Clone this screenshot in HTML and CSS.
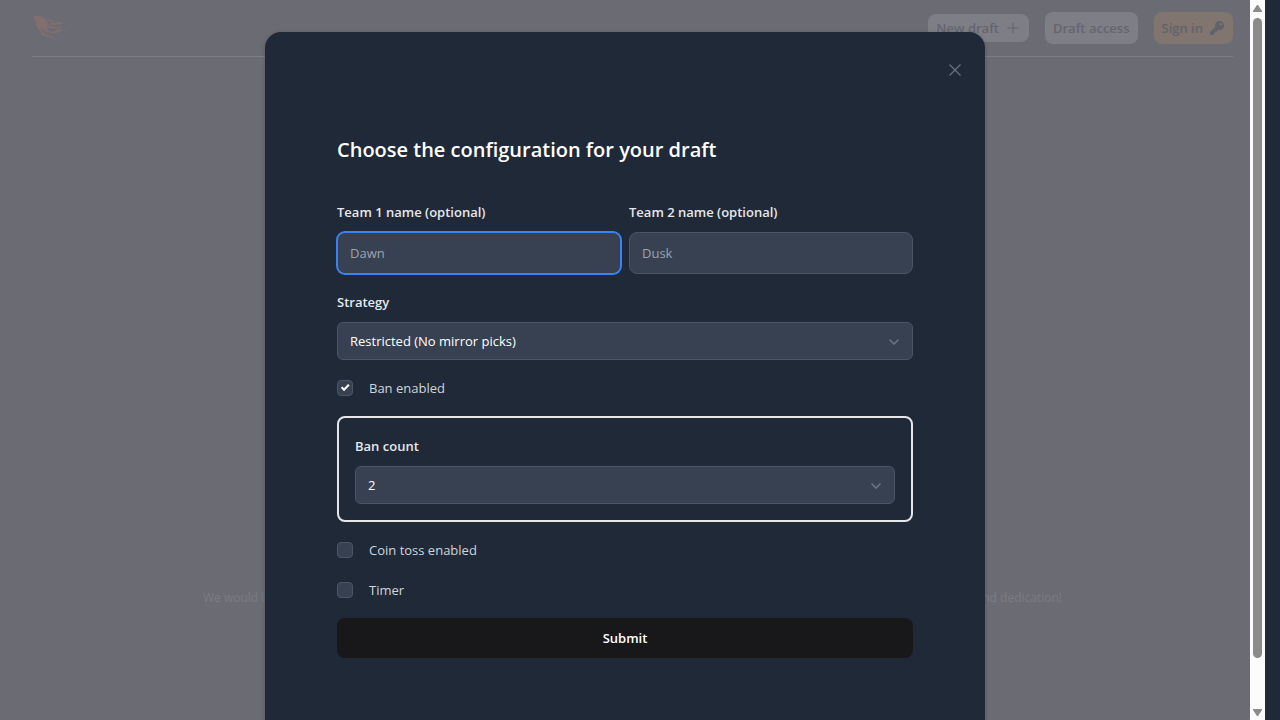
FILE: index.html
```html
<!DOCTYPE html>
<html lang="en">
<head>
<meta charset="utf-8">
<meta name="viewport" content="width=device-width, initial-scale=1">
<title>Draft configuration</title>
<link rel="stylesheet" href="styles.css">
</head>
<body>
<div class="page">
  <header class="topbar">
    <a class="brand" href="#" aria-label="Home">
      <svg width="36" height="26" viewBox="0 0 36 26" fill="currentColor">
        <path d="M0 3Q2 1 4 1Q8 0 11 2Q15 5 16 9Q17 11 14 12Q15 16 20 17Q16 19 11 15Q8 11 9 14Q11 18 16 20L21 22L24 25L18 22Q12 22 8 18L10 18Q5 14 4 9Q4 4 0 3Z"/>
        <path d="M15 4L20 5L22 7L17 6ZM17 9Q20 7 23 8L29 7L31 9L24 10Q20 9 17 11ZM15 12Q20 10 24 12L31 11Q27 14 22 14Q19 12 15 14ZM16 16Q20 18 23 16L26 14L31 14Q28 17 24 18Q19 19 16 16ZM31 15L36 18L32 17Z"/>
      </svg>
    </a>
    <nav class="actions">
      <button class="chip chip-short" type="button">New draft
        <svg width="16" height="16" viewBox="0 0 16 16" fill="none" stroke="currentColor"><path d="M8 2.500v11M2.500 8h11"/></svg>
      </button>
      <button class="chip" type="button">Draft access</button>
      <button class="chip chip-warm" type="button">Sign in
        <svg width="16" height="16" viewBox="0 0 16 16" fill="currentColor"><path fill-rule="evenodd" d="M10.500 1a4.500 4.500 0 0 0-4.300 5.900L1 12v3h3.500v-1.700H6v-1.500h1.500L9 9.700A4.500 4.500 0 1 0 10.500 1ZM11.700 3a1.300 1.300 0 1 1 0 2.600 1.300 1.300 0 0 1 0-2.600Z"/></svg>
      </button>
    </nav>
  </header>
  <footer class="thanks"><span>We would like to thank</span><span>and dedication!</span></footer>
</div>

<div class="layer">
  <div class="scroller">
    <section class="modal" role="dialog" aria-labelledby="modal-title">
      <button class="close" type="button" aria-label="Close">
        <svg width="12" height="12" viewBox="0 0 12 12" fill="none" stroke="currentColor" stroke-width="1.200"><path d="M.5.500l11 11M11.500.500l-11 11"/></svg>
      </button>
      <h1 class="title" id="modal-title">Choose the configuration for your draft</h1>
      <form class="form">
        <div class="teams">
          <div class="field">
            <label for="team1">Team 1 name (optional)</label>
            <input class="text active" id="team1" type="text" placeholder="Dawn">
          </div>
          <div class="field">
            <label for="team2">Team 2 name (optional)</label>
            <input class="text" id="team2" type="text" placeholder="Dusk">
          </div>
        </div>
        <div class="field">
          <label for="strategy">Strategy</label>
          <div class="select">
            <select id="strategy"><option>Restricted (No mirror picks)</option></select>
            <svg class="chevron" width="12" height="8" viewBox="0 0 12 8" fill="none" stroke="currentColor" stroke-width="1.600"><path d="M1.500 1.500l4.500 4.500 4.500-4.500"/></svg>
          </div>
        </div>
        <label class="check"><input type="checkbox" checked>Ban enabled</label>
        <div class="group">
          <div class="field">
            <label for="bans">Ban count</label>
            <div class="select">
              <select id="bans"><option>2</option></select>
              <svg class="chevron" width="12" height="8" viewBox="0 0 12 8" fill="none" stroke="currentColor" stroke-width="1.600"><path d="M1.500 1.500l4.500 4.500 4.500-4.500"/></svg>
            </div>
          </div>
        </div>
        <div class="checks">
          <label class="check"><input type="checkbox">Coin toss enabled</label>
          <label class="check"><input type="checkbox">Timer</label>
        </div>
        <button class="submit" type="button">Submit</button>
      </form>
    </section>
  </div>
  <div class="rail" aria-hidden="true">
    <svg width="9" height="7" viewBox="0 0 9 7"><path d="M4 0h1l4 6v1H0V6z"/></svg>
    <div class="thumb"></div>
    <svg width="9" height="7" viewBox="0 0 9 7"><path d="M0 0h9v1L5 7H4L0 1z"/></svg>
  </div>
</div>
</body>
</html>
```
FILE: styles.css
```css
* { box-sizing: border-box; }

body {
  margin: 0;
  height: 100vh;
  overflow: hidden;
  padding-right: 15px;
  background: #1f2937;
  color: #e5e7eb;
  font: 13px/20px "Segoe UI", "Open Sans", "Noto Sans", sans-serif;
}

button, input, select { font: inherit; }
button { border: 0; }
svg { display: block; }

.page {
  height: 100%;
  padding: 0 32px;
  display: flex;
  flex-direction: column;
  background: #6b6b74;
}

.topbar {
  height: 57px;
  flex: none;
  display: flex;
  align-items: center;
  justify-content: space-between;
  border-bottom: 1px solid #7d7d86;
}

.brand { color: #816f70; }
.actions { display: flex; align-items: center; gap: 16px; }

.chip {
  height: 32px;
  display: flex;
  align-items: center;
  gap: 6px;
  padding: 0 8px;
  border-radius: 8px;
  background: #7e7e87;
  color: #65656e;
  font-weight: 600;
}
.chip-short { height: 28px; }
.chip-warm { background: #80756f; color: #62626b; }

.thanks {
  margin: auto 171px 112px;
  display: flex;
  justify-content: space-between;
  color: #7c7c85;
  font-size: 12px;
}

.layer {
  position: absolute;
  inset: 0 15px 0 0;
  display: flex;
}

.scroller {
  flex: 1;
  overflow: hidden;
  padding: 32px 16px;
}

.modal {
  position: relative;
  max-width: 720px;
  min-height: 100vh;
  margin: 0 auto;
  padding: 102px 72px 72px;
  border-radius: 16px;
  background: #1f2937;
  box-shadow: 0 1px 4px rgba(0, 0, 0, .2);
}

.close {
  position: absolute;
  top: 24px;
  right: 16px;
  padding: 8px;
  background: none;
  color: #6b7280;
}

.title {
  margin: 0 0 36px;
  color: #fff;
  font-size: 20px;
  line-height: 32px;
  font-weight: 600;
}

.form { display: flex; flex-direction: column; gap: 18px; }
.teams { display: grid; grid-template-columns: 1fr 1fr; gap: 8px; }
.field { display: flex; flex-direction: column; gap: 10px; }
.field > label { font-weight: 600; }

.text, .select select {
  width: 100%;
  padding: 0 12px;
  border: 1px solid #4b5563;
  background: #384151;
  color: #fff;
  outline: 0;
}
.text { height: 42px; border-radius: 8px; }
.text::placeholder { color: #9ca3af; opacity: 1; }
.text.active { border-color: #3b82f6; box-shadow: 0 0 0 1px #3b82f6; }

.select { position: relative; }
.select select {
  display: block;
  height: 38px;
  border-radius: 6px;
  appearance: none;
}
.chevron {
  position: absolute;
  right: 13px;
  top: 16px;
  color: #6b7280;
  pointer-events: none;
}

.check {
  display: flex;
  align-items: center;
  gap: 16px;
  color: #d1d5db;
}
.check input {
  appearance: none;
  width: 16px;
  height: 16px;
  margin: 0;
  border: 1px solid #4b5563;
  border-radius: 4px;
  background: #384151;
}
.check input:checked::before {
  content: "";
  display: block;
  width: 14px;
  height: 14px;
  background: #fff;
  clip-path: polygon(20% 49%, 31% 39%, 43% 51%, 72% 22%, 83% 33%, 43% 74%);
}
.checks { display: flex; flex-direction: column; gap: 20px; }

.group {
  padding: 18px 16px 16px;
  border: 2px solid #e5e7eb;
  border-radius: 8px;
}

.submit {
  height: 40px;
  border-radius: 8px;
  background: #18181b;
  color: #fff;
  font-weight: 600;
}

.rail {
  width: 15px;
  padding: 5px 0 4px;
  display: flex;
  flex-direction: column;
  align-items: center;
  background: #fcfcfc;
  fill: #8b8b8b;
}
.thumb {
  width: 9px;
  flex: 1;
  margin: 6px 0 51px;
  border-radius: 5px;
  background: #8b8b8b;
}
```
